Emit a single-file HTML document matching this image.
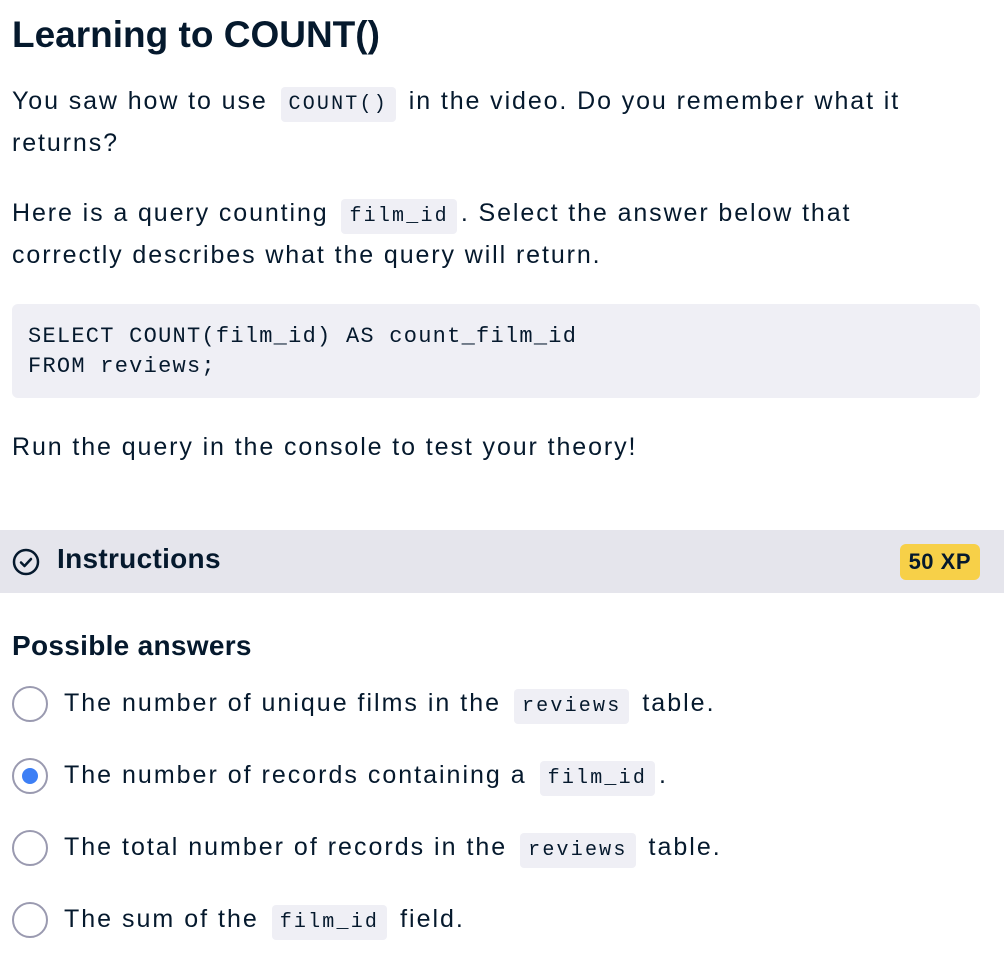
<!DOCTYPE html>
<html><head><meta charset="utf-8"><style>
body{margin:0;background:#fff;color:#05192d;font-family:"Liberation Sans",sans-serif;width:1004px;height:970px;overflow:hidden;position:relative}
.a{position:absolute;left:12px;white-space:nowrap}
h1{position:absolute;left:12px;top:14px;margin:0;font-size:37px;font-weight:bold;letter-spacing:0px}
.t{font-size:25px;line-height:42px;letter-spacing:1.9px}
code{font-family:"Liberation Mono",monospace;font-size:20px;letter-spacing:2.2px;background:#efeff5;border-radius:4px;padding:6px 8px;margin:0 4px;line-height:1}
.code{position:absolute;left:12px;top:304px;width:968px;height:94px;background:#efeff5;border-radius:6px;font-family:"Liberation Mono",monospace;font-size:22px;letter-spacing:1.25px;line-height:30px;box-sizing:border-box;padding:18px 16px;white-space:pre}
.bar{position:absolute;left:0;top:530px;width:1004px;height:63px;background:#e5e5ec}
.xp{position:absolute;right:24px;top:14px;background:#f7d048;border-radius:6px;font-weight:bold;font-size:22px;padding:5px 9px;letter-spacing:0.5px}
.r{position:absolute;left:12px;width:32px;height:32px;border:2px solid #9a9ab0;border-radius:50%}
.r.on::after{content:"";position:absolute;left:8px;top:8px;width:16px;height:16px;border-radius:50%;background:#3d7ff5}
.o{position:absolute;left:64px;font-size:25px;line-height:42px;white-space:nowrap;letter-spacing:2px}
</style></head><body>
<h1>Learning to COUNT()</h1>
<div class="a t" style="top:80px">You saw how to use <code>COUNT()</code> in the video. Do you remember what it<br>returns?</div>
<div class="a t" style="top:192px">Here is a query counting <code>film_id</code>. Select the answer below that<br>correctly describes what the query will return.</div>
<div class="code">SELECT COUNT(film_id) AS count_film_id
FROM reviews;</div>
<div class="a t" style="top:426px">Run the query in the console to test your theory!</div>
<div class="bar">
<svg style="position:absolute;left:12px;top:18px" width="28" height="28" viewBox="0 0 28 28"><circle cx="14" cy="14" r="12" fill="none" stroke="#05192d" stroke-width="2.5"/><path d="M9 14.5l3.5 3.5 6.5-7" fill="none" stroke="#05192d" stroke-width="2.5" stroke-linecap="round" stroke-linejoin="round"/></svg>
<div style="position:absolute;left:57px;top:13px;font-size:28px;font-weight:bold;letter-spacing:0.3px">Instructions</div>
<div class="xp">50 XP</div>
</div>
<div class="a" style="top:630px;font-size:28px;font-weight:bold;letter-spacing:0.3px">Possible answers</div>
<div class="r" style="top:686px"></div><div class="o" style="top:682px">The number of unique films in the <code>reviews</code> table.</div>
<div class="r on" style="top:758px"></div><div class="o" style="top:754px">The number of records containing a <code>film_id</code>.</div>
<div class="r" style="top:830px"></div><div class="o" style="top:826px">The total number of records in the <code>reviews</code> table.</div>
<div class="r" style="top:902px"></div><div class="o" style="top:898px">The sum of the <code>film_id</code> field.</div>
</body></html>
